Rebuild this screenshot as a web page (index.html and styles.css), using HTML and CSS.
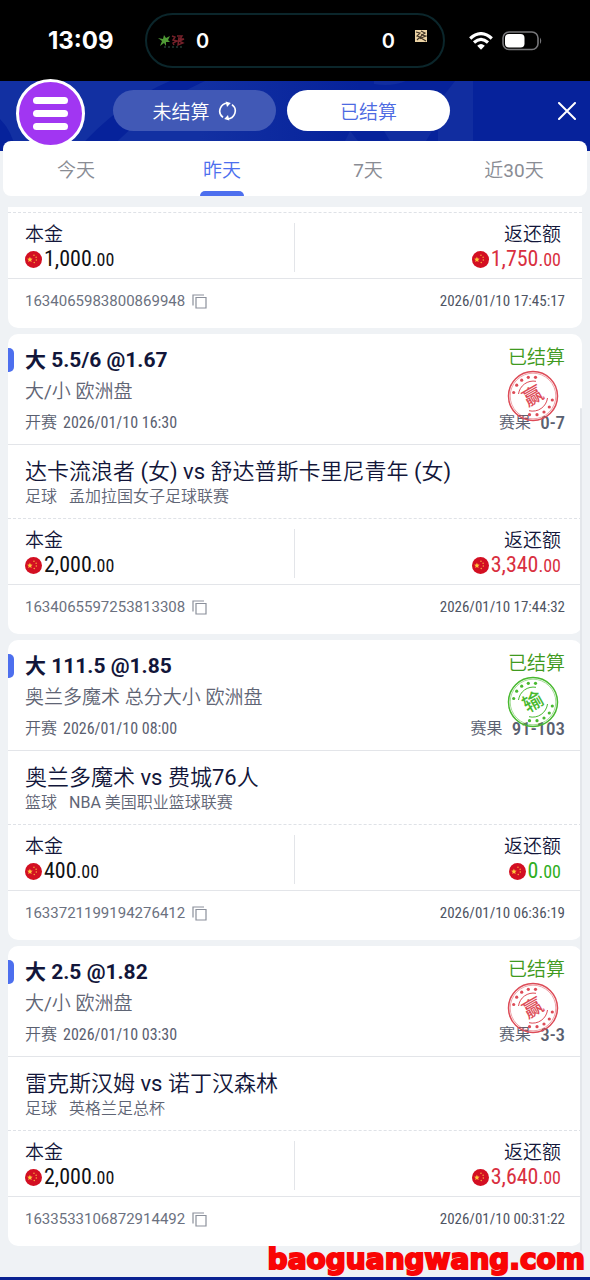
FILE: index.html
```
<!DOCTYPE html>
<html lang="zh-CN">
<head>
<meta charset="utf-8">
<meta name="viewport" content="width=device-width, initial-scale=1">
<title>已结算</title>
<link rel="stylesheet" href="styles.css">
</head>
<body>
<svg class="defs" aria-hidden="true">
  <symbol id="flag" viewBox="0 0 18 18">
    <circle cx="9" cy="9" r="9" fill="#d30f22"/>
    <path d="M5.2 6l.8 2 2.1.1-1.6 1.4.5 2.1-1.8-1.1-1.8 1.1.5-2.1L2.3 8.100l2.100-.1z" fill="#ffc83d"/>
    <g fill="#f5a93a"><circle cx="9.500" cy="4.500" r=".8"/><circle cx="11.800" cy="6.500" r=".8"/><circle cx="12" cy="9.600" r=".8"/><circle cx="9.800" cy="12.200" r=".8"/></g>
  </symbol>
  <symbol id="copy" viewBox="0 0 15 15">
    <path d="M1 11.500V1H12M4 3.500h10v10.500H4z" fill="none" stroke="#8b909b" stroke-width="1.200"/>
  </symbol>
  <symbol id="seal" viewBox="0 0 52 52">
    <g fill="none" stroke="currentColor">
      <circle cx="26" cy="26" r="24.500" stroke-width="1.500"/>
      <circle cx="26" cy="26" r="22.800" stroke-width=".5"/>
      <path d="M11.500 24A15 15 0 0 1 29 11.300M40.500 28A15 15 0 0 1 22 40.700" stroke-width="1"/>
    </g>
    <g fill="currentColor">
      <circle cx="6.700" cy="22.500" r="1.600"/><circle cx="9.700" cy="15.200" r="1.600"/><circle cx="14.700" cy="10.200" r="1.600"/><circle cx="21.300" cy="7.300" r="1.600"/><circle cx="28.500" cy="7.300" r="1.600"/>
      <circle cx="45.300" cy="30" r="1.600"/><circle cx="42.300" cy="37" r="1.600"/><circle cx="37" cy="42" r="1.600"/><circle cx="30" cy="44.700" r="1.600"/><circle cx="22.500" cy="44.700" r="1.600"/>
    </g>
  </symbol>
</svg>

<div class="status">
  <span class="clock">13:09</span>
  <div class="island">
    <svg class="island-art" viewBox="0 0 28 16" aria-hidden="true">
      <path d="M1 5l5 1 1-4 2 3 4-2-2 4 2 2-4 0 0 4-2-3-4 3 2-5zM1 9l4-1" fill="#4f9a35"/>
      <path d="M15 3l3 1-2 3 4 1-4 2 1 2M20 3h5l-2 3h4l-5 2 4 2-5 2 1-8" fill="none" stroke="#76212a" stroke-width="1.400"/>
      <path d="M7 14h20" stroke="#34584d" stroke-dasharray="2 2"/>
    </svg>
    <span>0</span>
    <span class="island-right">0</span>
    <svg class="island-tile" viewBox="0 0 12 12" aria-hidden="true">
      <path d="M0 0h12v12H0z" fill="#ecd3a4"/>
      <path d="M1 2l4 1-3 3 3 1-3 3M6 1l4 2-3 2 4 1-5 2 5 3M5 9l2-5" fill="none" stroke="#3e3124" stroke-width="1.100"/>
    </svg>
  </div>
  <svg class="wifi" viewBox="0 0 24 18" aria-hidden="true">
    <g fill="none" stroke="#fff" stroke-width="3.200"><path d="M1.200 6.500Q12-3.200 22.800 6.500"/><path d="M5 10.500Q12 4.300 19 10.500"/></g>
    <path d="M8.200 13.700Q12 10.300 15.800 13.700L12 17.800z" fill="#fff"/>
  </svg>
  <svg class="battery" viewBox="0 0 41 20" aria-hidden="true">
    <rect x="1" y="1" width="35" height="17.500" rx="6" fill="none" stroke="#77777a" stroke-width="1.600"/>
    <rect x="3" y="3" width="19.500" height="13.500" rx="4" fill="#fff"/>
    <path d="M38 6.500q2.500 3.300 0 6.600z" fill="#77777a"/>
  </svg>
</div>

<header class="topbar">
  <svg class="topbar-art" viewBox="0 0 590 70" preserveAspectRatio="xMinYMin slice" aria-hidden="true">
    <path d="M0 38Q12 50 16 70H0z" fill="#06229b"/>
    <path d="M170 0H205Q150 25 108 70H76Q118 22 170 0z" fill="#06229b"/>
    <path d="M374 0h32q-14 6-32 3zM438 22L455 0h18v70h-35zM340 70l10-20 16 20zM384 50h48l-12 20h-24z" fill="#112da0"/>
  </svg>
  <button class="menu" aria-label="菜单"><i></i><i></i><i></i></button>
  <button class="mode">未结算
    <svg class="refresh" viewBox="0 0 20 20" aria-hidden="true">
      <g fill="none" stroke="#fff" stroke-width="1.700"><path d="M10.500 1.800A8.300 8.300 0 0 0 5.300 16.800"/><path d="M9.500 18.200A8.300 8.300 0 0 0 14.700 3.200"/></g>
      <path d="M8 0l5.500 1.500-4 4.300zM12 20l-5.500-1.500 4-4.300z" fill="#fff"/>
    </svg>
  </button>
  <button class="mode mode-on">已结算</button>
  <button class="close" aria-label="关闭"><svg viewBox="0 0 18 18"><path d="M1 1l16 16M17 1L1 17" stroke="#fff" stroke-width="2" stroke-linecap="round"/></svg></button>
</header>

<nav class="tabs">
  <button class="tab">今天</button>
  <button class="tab tab-on">昨天</button>
  <button class="tab">7天</button>
  <button class="tab">近30天</button>
</nav>

<main class="list">
  <article class="card card-cut">
    <div class="cut-edge"></div>
    <section class="money">
      <div class="stake"><span class="label">本金</span><span class="amount"><svg class="flag"><use href="#flag"/></svg>1,000<small>.00</small></span></div>
      <div class="payout"><span class="label">返还额</span><span class="amount lucky"><svg class="flag"><use href="#flag"/></svg>1,750<small>.00</small></span></div>
    </section>
    <footer class="foot"><span class="order">1634065983800869948</span><button class="copy" aria-label="复制"><svg><use href="#copy"/></svg></button><time>2026/01/10 17:45:17</time></footer>
  </article>

  <article class="card">
    <section class="pick">
      <div class="pick-main"><h2>大 5.5/6 @1.67</h2><p class="market">大/小 欧洲盘</p><p class="kickoff">开赛 <time>2026/01/10 16:30</time></p></div>
      <div class="pick-side"><span class="state">已结算</span><span class="result">赛果 <b>0-7</b></span></div>
      <svg class="seal seal-win" viewBox="0 0 52 52"><use href="#seal"/><text class="seal-text" x="26" y="33" transform="rotate(-30 26 26)">赢</text></svg>
    </section>
    <section class="match"><h3>达卡流浪者 (女) vs 舒达普斯卡里尼青年 (女)</h3><p><span>足球</span><span>孟加拉国女子足球联赛</span></p></section>
    <section class="money">
      <div class="stake"><span class="label">本金</span><span class="amount"><svg class="flag"><use href="#flag"/></svg>2,000<small>.00</small></span></div>
      <div class="payout"><span class="label">返还额</span><span class="amount lucky"><svg class="flag"><use href="#flag"/></svg>3,340<small>.00</small></span></div>
    </section>
    <footer class="foot"><span class="order">1634065597253813308</span><button class="copy" aria-label="复制"><svg><use href="#copy"/></svg></button><time>2026/01/10 17:44:32</time></footer>
  </article>

  <article class="card">
    <section class="pick">
      <div class="pick-main"><h2>大 111.5 @1.85</h2><p class="market">奥兰多魔术 总分大小 欧洲盘</p><p class="kickoff">开赛 <time>2026/01/10 08:00</time></p></div>
      <div class="pick-side"><span class="state">已结算</span><span class="result">赛果 <b>91-103</b></span></div>
      <svg class="seal seal-lose" viewBox="0 0 52 52"><use href="#seal"/><text class="seal-text" x="26" y="33" transform="rotate(-30 26 26)">输</text></svg>
    </section>
    <section class="match"><h3>奥兰多魔术 vs 费城76人</h3><p><span>篮球</span><span>NBA 美国职业篮球联赛</span></p></section>
    <section class="money">
      <div class="stake"><span class="label">本金</span><span class="amount"><svg class="flag"><use href="#flag"/></svg>400<small>.00</small></span></div>
      <div class="payout"><span class="label">返还额</span><span class="amount nil"><svg class="flag"><use href="#flag"/></svg>0<small>.00</small></span></div>
    </section>
    <footer class="foot"><span class="order">1633721199194276412</span><button class="copy" aria-label="复制"><svg><use href="#copy"/></svg></button><time>2026/01/10 06:36:19</time></footer>
  </article>

  <article class="card">
    <section class="pick">
      <div class="pick-main"><h2>大 2.5 @1.82</h2><p class="market">大/小 欧洲盘</p><p class="kickoff">开赛 <time>2026/01/10 03:30</time></p></div>
      <div class="pick-side"><span class="state">已结算</span><span class="result">赛果 <b>3-3</b></span></div>
      <svg class="seal seal-win" viewBox="0 0 52 52"><use href="#seal"/><text class="seal-text" x="26" y="33" transform="rotate(-30 26 26)">赢</text></svg>
    </section>
    <section class="match"><h3>雷克斯汉姆 vs 诺丁汉森林</h3><p><span>足球</span><span>英格兰足总杯</span></p></section>
    <section class="money">
      <div class="stake"><span class="label">本金</span><span class="amount"><svg class="flag"><use href="#flag"/></svg>2,000<small>.00</small></span></div>
      <div class="payout"><span class="label">返还额</span><span class="amount lucky"><svg class="flag"><use href="#flag"/></svg>3,640<small>.00</small></span></div>
    </section>
    <footer class="foot"><span class="order">1633533106872914492</span><button class="copy" aria-label="复制"><svg><use href="#copy"/></svg></button><time>2026/01/10 00:31:22</time></footer>
  </article>
  <div class="scroll-thumb"></div>
</main>
<div class="bottom-edge"><span class="site">baoguangwang.com</span></div>
</body>
</html>
```

FILE: styles.css
```
* { box-sizing: border-box; }
body {
  margin: 0;
  min-height: 100vh;
  display: flex;
  flex-direction: column;
  background: #eff2f5;
  color: #12163a;
  font-family: Roboto, "Noto Sans CJK SC DemiLight", "Noto Sans CJK SC", sans-serif;
}
h2, h3, p { margin: 0; }
button { border: 0; padding: 0; background: none; font: inherit; color: inherit; cursor: pointer; }
svg { display: block; flex: none; }
.defs { position: absolute; width: 0; height: 0; }

.status {
  display: flex;
  align-items: center;
  height: 81px;
  padding-left: 48px;
  background: #000;
  color: #fff;
  font-family: Inter, sans-serif;
}
.clock { width: 97px; font-size: 24px; font-weight: 700; }
.island {
  flex: 0 1 300px;
  display: flex;
  align-items: center;
  height: 55px;
  padding: 0 16px 0 10px;
  border: 2px solid #0b262b;
  border-radius: 28px;
  font-size: 20px;
  font-weight: 600;
}
.island-art { width: 28px; height: 16px; margin-right: 11px; }
.island-right { margin-left: auto; }
.island-tile { width: 12px; height: 12px; margin: 0 0 10px 20px; }
.wifi { width: 24px; height: 18px; margin-left: 24px; }
.battery { width: 41px; height: 20px; margin-left: 9px; }

.topbar {
  position: relative;
  display: flex;
  gap: 11px;
  height: 70px;
  padding: 9px 14px 0 113px;
  background: linear-gradient(90deg, #1230a2 0, #1230a2 200px, #06229b 360px);
}
.topbar-art { position: absolute; inset: 0; width: 100%; height: 100%; }
.menu {
  position: absolute;
  left: 16px;
  top: -2px;
  z-index: 2;
  display: flex;
  flex-direction: column;
  align-items: center;
  justify-content: center;
  gap: 6px;
  width: 69px;
  height: 69px;
  border: 3px solid #fff;
  border-radius: 50%;
  background: #a136f2;
}
.menu i { width: 35px; height: 7px; border-radius: 4px; background: #fff; }
.mode {
  position: relative;
  flex: 0 1 163px;
  display: flex;
  align-items: center;
  justify-content: center;
  gap: 8px;
  height: 41px;
  border-radius: 21px;
  background: #4159b6;
  color: #fff;
  font-size: 19px;
}
.mode-on { background: #fff; color: #4d6ae2; }
.refresh { width: 19px; height: 20px; }
.close { position: relative; width: 18px; height: 41px; margin-left: auto; }
.close svg { width: 18px; height: 18px; }

.tabs {
  position: relative;
  display: grid;
  grid-template-columns: repeat(4, 1fr);
  height: 55px;
  margin: -10px 3px 11px;
  border-radius: 8px;
  background: #fff;
}
.tab { position: relative; font-size: 19px; color: #898c94; }
.tab-on { color: #4d6fee; }
.tab-on::after {
  content: "";
  position: absolute;
  left: calc(50% - 22px);
  bottom: 0;
  width: 44px;
  height: 5px;
  border-radius: 5px 5px 0 0;
  background: #4d6fee;
}

.list { position: relative; flex: 1; display: flex; flex-direction: column; gap: 6px; padding: 0 8px 30px; }
.card { border-radius: 10px; background: #fff; }
.card-cut { border-radius: 0 0 10px 10px; }
.cut-edge { height: 6px; border-bottom: 1px dashed #dfe2e7; }

.pick {
  position: relative;
  display: flex;
  justify-content: space-between;
  padding: 12px 17px 8px;
  border-bottom: 1px solid #e3e5e9;
}
.pick::before {
  content: "";
  position: absolute;
  left: 0;
  top: 14px;
  width: 6px;
  height: 24px;
  border-radius: 0 5px 5px 0;
  background: #4d6fee;
}
.pick-main { display: flex; flex-direction: column; gap: 6px; }
h2 { font-family: Roboto, "Noto Sans CJK SC", sans-serif; font-size: 21px; line-height: 28px; font-weight: 700; }
.market { font-size: 19px; line-height: 24px; color: #5f6575; }
.kickoff { display: flex; gap: 6px; font-size: 16px; line-height: 26px; color: #5a6070; }
.kickoff time, .foot time, .result b, .amount { font-family: "Roboto Condensed", Roboto, sans-serif; font-weight: 400; }
.pick-side { display: flex; flex-direction: column; justify-content: space-between; align-items: flex-end; }
.state { font-size: 19px; line-height: 24px; color: #3f9a20; }
.result { display: flex; gap: 9px; font-size: 16px; line-height: 26px; color: #5a6070; }
.result b { font-size: 19px; font-weight: 500; }
.seal { position: absolute; right: 23px; top: 36px; width: 52px; height: 52px; }
.seal-win { color: #dd4b57; }
.seal-lose { color: #48b92f; }
.seal-text { font-family: "Noto Sans CJK SC", sans-serif; font-size: 20px; font-weight: 500; fill: currentColor; text-anchor: middle; }

.match { padding: 12px 17px 11px; border-bottom: 1px dashed #dfe2e7; }
h3 { font-size: 22px; line-height: 30px; font-weight: 400; }
.match p { display: flex; gap: 12px; font-size: 16px; line-height: 20px; color: #5f6575; }

.money { display: flex; padding: 10px 17px 6px; border-bottom: 1px solid #e3e5e9; }
.stake, .payout { width: 50%; display: flex; flex-direction: column; }
.stake { border-right: 1px solid #e3e5e9; }
.payout { align-items: flex-end; padding-right: 4px; }
.label { font-size: 19px; line-height: 24px; }
.amount { display: flex; align-items: baseline; font-size: 22px; line-height: 24px; color: #101115; }
.stake .amount, .payout .amount { font-weight: 450; }
.amount small { font-size: 18px; }
.flag { width: 17px; height: 17px; margin-right: 2px; align-self: center; }
.payout .lucky { color: #d9303f; }
.payout .nil { color: #2fae1e; }

.foot { display: flex; align-items: center; padding: 10px 17px 14px; font-size: 15px; line-height: 25px; color: #6b7180; }
.copy { margin-left: 7px; }
.copy svg { width: 15px; height: 15px; }
.foot time { margin-left: auto; font-size: 15px; font-weight: 450; color: #4e5463; }

.scroll-thumb { position: absolute; right: 8px; top: 201px; bottom: 26px; width: 2px; border-radius: 2px; background: #e3e6ea; }
.bottom-edge { position: relative; height: 3px; background: #0a2191; }
.site {
  position: absolute;
  right: 5px;
  bottom: 3px;
  font-family: "DejaVu Sans", sans-serif;
  font-size: 28px;
  line-height: 34px;
  font-weight: 700;
  color: #f90505;
  -webkit-text-stroke: 2px #f90505;
}
```
